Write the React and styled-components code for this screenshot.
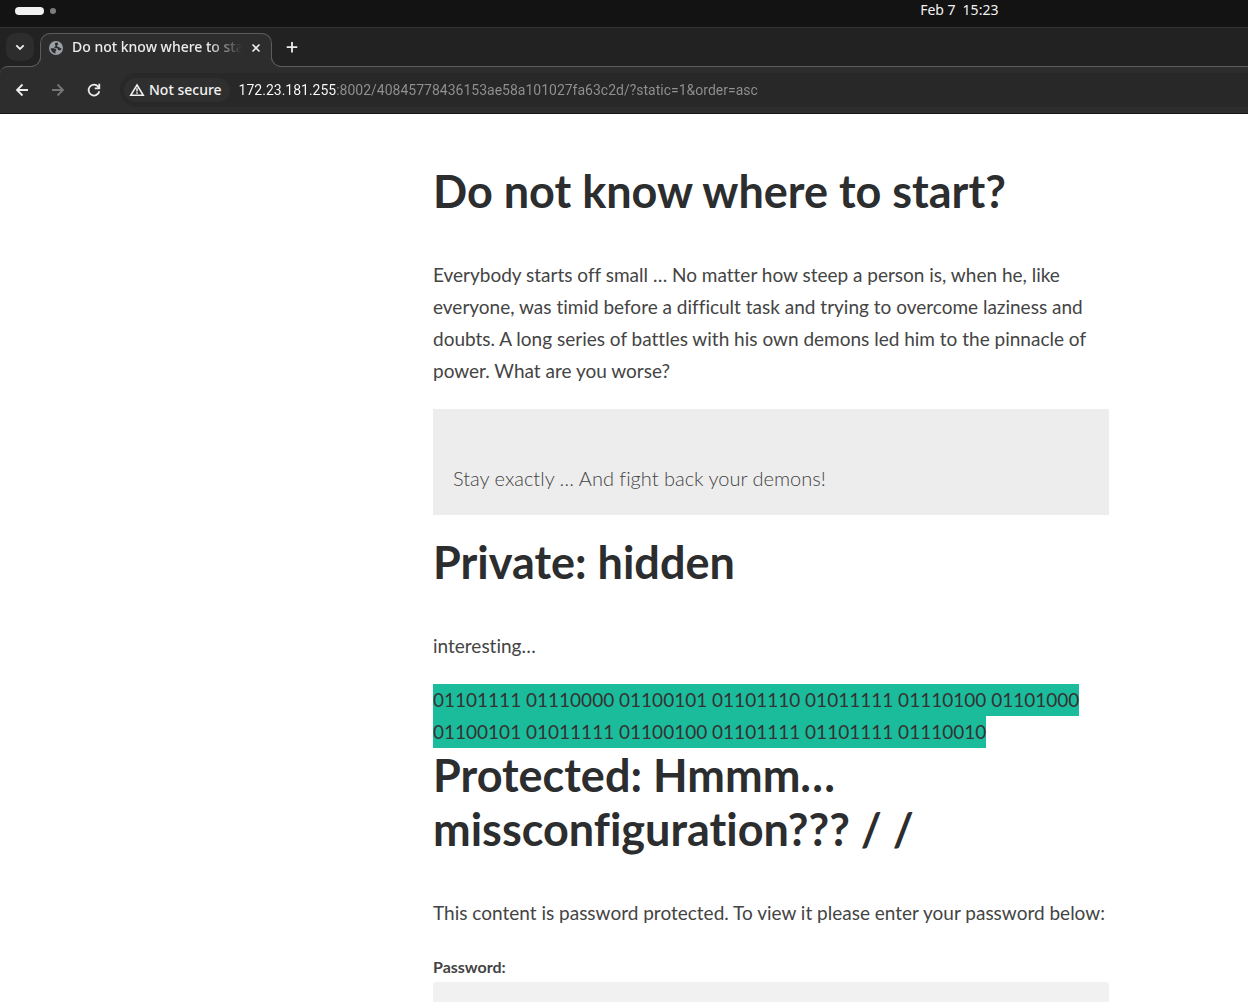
import React from "react";
import styled, { createGlobalStyle } from "styled-components";

const chromeFont = `"Noto Sans", "Open Sans", sans-serif`;
const addressFont = `Roboto, "Noto Sans", sans-serif`;
const pageFont = `Lato, "Open Sans", sans-serif`;

const GlobalStyle = createGlobalStyle`
  *, *::before, *::after { box-sizing: border-box; }
  html, body { margin: 0; background: #fff; }
  body { overflow: hidden; height: 100vh; }
  h2, p, blockquote { margin: 0; }
  button, input { font: inherit; }
`;

const SystemBar = styled.header`
  display: flex;
  align-items: center;
  justify-content: space-between;
  height: 28px;
  padding: 0 20% 6px 15px;
  background: #131313;
  border-bottom: 1px solid #333;
  color: #f2f2f2;
  font: 14px/20px ${chromeFont};
`;

const Workspaces = styled.button`
  display: flex;
  align-items: center;
  gap: 6px;
  padding: 0;
  border: 0;
  background: none;
`;

const Pill = styled.span`
  width: ${(p) => (p.$active ? 29 : 6)}px;
  height: ${(p) => (p.$active ? 8 : 6)}px;
  border-radius: 4px;
  background: ${(p) => (p.$active ? "#f2f2f2" : "#7d7d7d")};
`;

const Clock = styled.time`
  display: flex;
  gap: 7px;
  padding-bottom: 2px;
`;

const TabStrip = styled.nav`
  display: flex;
  align-items: flex-start;
  height: 38px;
  padding: 5px 6px 0;
  background: #222;
`;

const IconButton = styled.button`
  display: grid;
  place-items: center;
  flex: none;
  width: 28px;
  height: 28px;
  padding: 0;
  border: 0;
  border-radius: 10px;
  background: ${(p) => (p.$filled ? "#2d2d2d" : "none")};
  color: ${(p) => (p.$dim ? "#767676" : "#ececec")};
`;

const Tab = styled.div`
  position: relative;
  z-index: 1;
  display: flex;
  align-items: center;
  width: 232px;
  height: 34px;
  margin: 0 6px;
  padding: 0 1px 6px 8px;
  border: 1px solid #5c5c5c;
  border-bottom: 0;
  border-radius: 10px 10px 0 0;
  background: #2d2d2d;
  color: #ececec;

  &::before,
  &::after {
    content: "";
    position: absolute;
    bottom: 0;
    width: 11px;
    height: 11px;
    border-bottom: 1px solid #5c5c5c;
  }
  &::before {
    right: 100%;
    border-right: 1px solid #5c5c5c;
    border-bottom-right-radius: 10px;
    box-shadow: 3px 3px 0 #2d2d2d;
  }
  &::after {
    left: 100%;
    border-left: 1px solid #5c5c5c;
    border-bottom-left-radius: 10px;
    box-shadow: -3px 3px 0 #2d2d2d;
  }
`;

const TabTitle = styled.span`
  flex: 1;
  min-width: 0;
  margin-left: 9px;
  padding-bottom: 2px;
  overflow: hidden;
  white-space: nowrap;
  font: 500 14px/20px ${chromeFont};
  mask-image: linear-gradient(to right, #000 80%, transparent);
`;

const ToolbarBack = styled.div`
  background: #222;
`;

const Toolbar = styled.div`
  display: flex;
  align-items: center;
  gap: 8px;
  height: 48px;
  padding: 0 0 0 8px;
  background: #2d2d2d;
  border-top: 1px solid #5c5c5c;
  border-bottom: 1px solid #161616;
  border-top-left-radius: 8px;
`;

const Omnibox = styled.div`
  display: flex;
  align-items: center;
  gap: 8px;
  flex: 1;
  height: 34px;
  margin-left: 4px;
  padding-left: 4px;
  border-radius: 17px 0 0 17px;
  background: #282828;
`;

const SecurityChip = styled.button`
  display: flex;
  align-items: center;
  gap: 4px;
  height: 24px;
  padding: 0 8px 0 5px;
  border: 0;
  border-radius: 12px;
  background: #2f2f2f;
  color: #f2f2f2;
  font: 500 14px/20px ${chromeFont};
  white-space: nowrap;
`;

const Address = styled.input`
  flex: 1;
  min-width: 0;
  height: 24px;
  padding: 0 1px;
  border: 0;
  outline: 0;
  background: linear-gradient(to right, #fff 98px, #919191 98px);
  background-clip: text;
  color: transparent;
  font: 14px/20px ${addressFont};
`;

const Page = styled.main`
  padding: 50px 139px 0 433px;
  color: #444;
  font: 19px/32px ${pageFont};
  font-variant-ligatures: none;
`;

const Article = styled.article`
  display: flex;
  flex-direction: column;
  gap: 22px;
  padding-bottom: ${(p) => p.$space || 0}px;
`;

const Title = styled.h2`
  margin-bottom: 19px;
  color: #2c2d2e;
  font-size: 45px;
  line-height: 54px;
  font-weight: 700;
`;

const Quote = styled.blockquote`
  padding: 53px 20px 21px;
  background: #ededed;
  color: #444;
  font-size: 20px;
  font-weight: 300;
`;

const Selected = styled.mark`
  padding: 4px 0 5px;
  background: #1bbc9b;
  color: #333;
`;

const Form = styled.form`
  display: flex;
  flex-direction: column;
  gap: 5px;
  padding-top: 6px;
`;

const Label = styled.label`
  color: #444;
  font-size: 16px;
  line-height: 20px;
  font-weight: 700;
`;

const PasswordField = styled.input`
  width: 100%;
  height: 44px;
  padding: 0 12px;
  border: 0;
  border-radius: 3px;
  background: #f1f1f1;
`;

const Stroke = ({ d, size = 16, width = 1.8 }) => (
  <svg width={size} height={size} viewBox="0 0 16 16" fill="none" stroke="currentColor" strokeWidth={width} aria-hidden="true">
    <path d={d} />
  </svg>
);

const Globe = () => (
  <svg width="14" height="14" viewBox="0 0 14 14" aria-hidden="true">
    <circle cx="7" cy="7" r="7" fill="#9aa0a6" />
    <path
      fill="#2d2d2d"
      d="M8.200 1.600C6.600 1.500 5.800 2.300 5.900 3.300c.1.800.7 1 .6 1.600-.1.700-1 .5-1.100 1.300-.1.900.9 1.100 1.900 1.100 1.200 0 1.500.5 1.600 1.200.1.700.6.900 1.300.8l1.800-.4c.3-.6.400-1.200.400-1.900-.5.3-1.200.2-1.600-.3-.5-.7-1-.8-1.700-.8-.8-.1-1.100-.6-1-1.200.1-.7.7-.7 1-1.200.3-.6-.2-1.200-.9-1.900zM1.600 7.200c.2 2.700 2.200 4.900 4.900 5.200.2-.8-.1-1.300-.1-1.800.1-.7.900-.9.900-1.600 0-.8-.7-1-1.400-1.200-.5-.2-.7-.6-1.400-.6z"
    />
  </svg>
);

export default function App() {
  return (
    <>
      <GlobalStyle />
      <SystemBar>
        <Workspaces aria-label="Workspaces">
          <Pill $active />
          <Pill />
        </Workspaces>
        <Clock>
          <span>Feb 7</span>
          <span>15:23</span>
        </Clock>
      </SystemBar>
      <TabStrip>
        <IconButton $filled aria-label="Search tabs">
          <Stroke d="M4.300 6.300 8 10l3.700-3.700" />
        </IconButton>
        <Tab>
          <Globe />
          <TabTitle>Do not know where to start?</TabTitle>
          <IconButton aria-label="Close tab">
            <Stroke d="m4.500 4.500 7 7m0-7-7 7" width={1.7} />
          </IconButton>
        </Tab>
        <IconButton aria-label="New tab">
          <Stroke d="M8 3v10.500M2.700 8.200h10.600" />
        </IconButton>
      </TabStrip>
      <ToolbarBack>
        <Toolbar>
          <IconButton aria-label="Back">
            <Stroke d="M14 8H3m5.500-5.500L3 8l5.500 5.500" />
          </IconButton>
          <IconButton $dim aria-label="Forward">
            <Stroke d="M2 8h11M7.500 2.500 13 8l-5.500 5.500" />
          </IconButton>
          <IconButton aria-label="Reload">
            <Stroke d="M13.300 9.200A5.400 5.400 0 1 1 12.200 4.700L13.300 6M13.300 1.700V6.300H8.700" />
          </IconButton>
          <Omnibox>
            <SecurityChip>
              <svg width="16" height="16" viewBox="0 0 16 16" aria-hidden="true">
                <path d="M8 3 14.200 13.200H1.800z" fill="none" stroke="currentColor" strokeWidth="1.600" />
                <path d="M8 6.200v3.400M8 10.300v1.500" stroke="currentColor" strokeWidth="1.500" />
              </svg>
              Not secure
            </SecurityChip>
            <Address
              aria-label="Address"
              defaultValue="172.23.181.255:8002/40845778436153ae58a101027fa63c2d/?static=1&order=asc"
            />
          </Omnibox>
        </Toolbar>
      </ToolbarBack>
      <Page>
        <Article $space={20}>
          <Title>Do not know where to start?</Title>
          <p>
            Everybody starts off small … No matter how steep a person is, when he, like everyone, was timid before a
            difficult task and trying to overcome laziness and doubts. A long series of battles with his own demons led
            him to the pinnacle of power. What are you worse?
          </p>
          <Quote>Stay exactly … And fight back your demons!</Quote>
        </Article>
        <Article>
          <Title>Private: hidden</Title>
          <p>interesting…</p>
          <p>
            <Selected>
              01101111 01110000 01100101 01101110 01011111 01110100 01101000 01100101 01011111 01100100 01101111
              01101111 01110010
            </Selected>
          </p>
        </Article>
        <Article>
          <Title>Protected: Hmmm… missconfiguration??? / /</Title>
          <p>This content is password protected. To view it please enter your password below:</p>
          <Form onSubmit={(e) => e.preventDefault()}>
            <Label htmlFor="post-password">Password:</Label>
            <PasswordField id="post-password" type="password" />
          </Form>
        </Article>
      </Page>
    </>
  );
}
